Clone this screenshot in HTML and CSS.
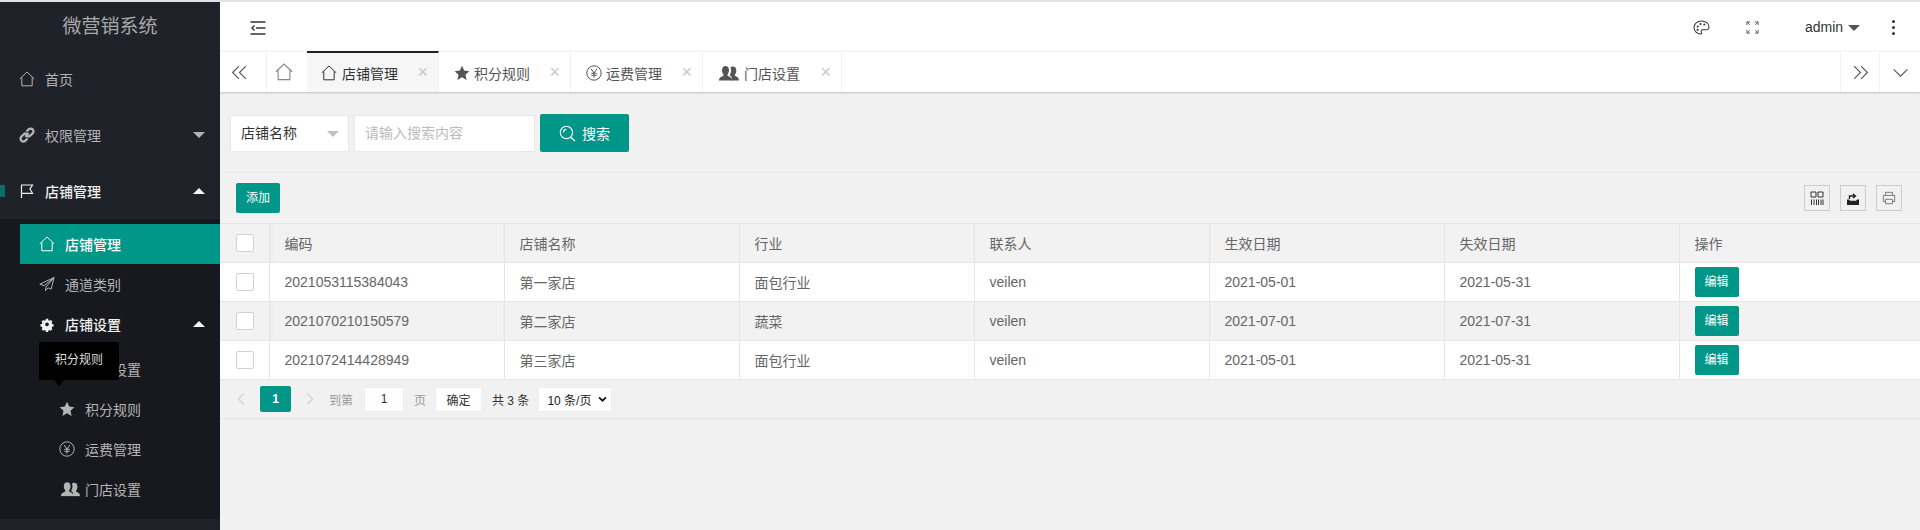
FILE: index.html
```html
<!DOCTYPE html>
<html lang="zh-CN">
<head>
<meta charset="utf-8">
<title>微营销系统</title>
<link rel="stylesheet" href="styles.css">
</head>
<body>
<svg class="defs" width="0" height="0" aria-hidden="true">
  <symbol id="i-home" viewBox="0 0 16 16"><path d="M.8 7.800 8 1l7.200 6.800M2.800 6.400v8.400h10.400V6.400" fill="none" stroke="currentColor" stroke-width="1"/></symbol>
  <symbol id="i-star" viewBox="0 0 16 16"><path d="M8 .8l2.200 4.800 5.200.6-3.900 3.500 1.100 5.200L8 12.300l-4.600 2.600 1.100-5.200L.6 6.200l5.200-.6z" fill="currentColor"/></symbol>
  <symbol id="i-rmb" viewBox="0 0 16 16"><circle cx="8" cy="8" r="7.200" fill="none" stroke="currentColor"/><path d="M5 3.800 8 8l3-4.200M8 8v4.600M5.300 8.300h5.400M5.300 10.300h5.400" fill="none" stroke="currentColor"/></symbol>
  <symbol id="i-users" viewBox="0 0 20 16"><path d="M0 15.500c0-3 2-3.600 4-4.600.9-.5.600-1.300.1-2C3.300 7.800 3 6.700 3 5.200 3 2.700 4.300 1 6.500 1S10 2.700 10 5.200c0 1.500-.3 2.600-1.100 3.700-.5.700-.8 1.500.1 2 2 1 4 1.600 4 4.600z" fill="currentColor"/><path d="M12 15.500h8c0-3-1.800-3.600-3.600-4.500-.8-.4-.6-1.200-.1-1.900.7-1 1-2 1-3.500C17.300 3 16 1.500 13.800 1.500c-1 0-1.800.3-2.400.9.500.8.700 1.800.7 2.800 0 1.700-.4 3-1.200 4.200-.4.600-.2 1 .4 1.300 1.500.8 2 2.500 .7 4.800z" fill="currentColor"/></symbol>
</svg>
<div class="app">
  <aside class="side">
    <div class="logo">微营销系统</div>
    <ul class="nav">
      <li class="item"><svg class="ico" viewBox="0 0 16 16"><use href="#i-home"/></svg>首页</li>
      <li class="item"><svg class="ico" viewBox="0 0 16 16"><path d="M6.300 9.700 9.700 6.300M7.500 4.500 9.600 2.400a2.800 2.800 0 0 1 4 4L11.500 8.500a2.800 2.800 0 0 1-3.800.1M8.500 11.500l-2.100 2.100a2.800 2.800 0 0 1-4-4L4.500 7.500a2.800 2.800 0 0 1 3.800-.1" fill="none" stroke="currentColor" stroke-width="2.300"/></svg>权限管理<i class="caret down"></i></li>
      <li class="item on"><span class="mark"></span><svg class="ico" viewBox="0 0 16 16"><path d="M2.500 15V2h11L11 6l2.500 4.300h-11" fill="none" stroke="currentColor" stroke-width="1.200"/></svg>店铺管理<i class="caret up"></i></li>
      <li class="sub">
        <div class="subitem active"><svg class="ico" viewBox="0 0 16 16"><use href="#i-home"/></svg>店铺管理</div>
        <div class="subitem"><svg class="ico" viewBox="0 0 16 16"><path d="M15 1.500.8 8.200l4.400 1.500L15 1.500 7 11l-.5 3.600 2.700-2.700 3 1.100z" fill="none" stroke="currentColor" stroke-linejoin="round"/></svg>通道类别</div>
        <div class="subitem on"><svg class="ico" viewBox="0 0 16 16"><path fill-rule="evenodd" d="M6.500 1h3l.4 2 1.500.7 1.800-1 2 2.100-1 1.800.6 1.400 2 .5v3l-2 .4-.6 1.500 1 1.800-2 2-1.800-1-1.500.6-.4 2h-3l-.4-2-1.500-.6-1.800 1-2-2 1-1.800-.6-1.500-2-.4v-3l2-.5.6-1.400-1-1.800 2-2.100 1.800 1 1.500-.7zM8 6a2.500 2.500 0 1 0 0 5 2.500 2.500 0 0 0 0-5z" fill="currentColor" transform="translate(2 1.900) scale(.75)"/></svg>店铺设置<i class="caret up"></i></div>
        <div class="subsub">
          <div class="leaf"><svg class="ico" viewBox="0 0 16 16"><rect x="1" y="2" width="14" height="12" fill="none" stroke="currentColor"/></svg>积分设置</div>
          <div class="leaf"><svg class="ico" viewBox="0 0 16 16"><use href="#i-star"/></svg>积分规则</div>
          <div class="leaf"><svg class="ico" viewBox="0 0 16 16"><use href="#i-rmb"/></svg>运费管理</div>
          <div class="leaf"><svg class="ico wide" viewBox="0 0 20 16"><use href="#i-users"/></svg>门店设置</div>
        </div>
      </li>
    </ul>
    <div class="tip">积分规则</div>
  </aside>
  <main class="main">
    <header class="top">
      <svg class="tool-ico" viewBox="0 0 16 16"><path d="M.5 2h15M.5 14h15M6 8h9.500M4.500 5.500 2 8l2.500 2.500" fill="none" stroke="#333" stroke-width="1.400"/></svg>
      <div class="top-right">
        <svg class="tr-ico" viewBox="0 0 18 16"><path d="M9 1C4.500 1 1 4 1 8s3.500 7 6.800 7c1.800 0 1.500-1.500 1-2.300-.6-1 .1-2.200 1.700-2.200h3c2 0 3.500-1 3.500-3C17 3.500 13.500 1 9 1z" fill="none" stroke="#333" stroke-width="1.100"/><circle cx="5" cy="7" r="1.100" fill="#333"/><circle cx="8" cy="4.300" r="1.100" fill="#333"/><circle cx="12" cy="4.800" r="1.100" fill="#333"/><circle cx="4.800" cy="10.500" r="1.100" fill="#333"/></svg>
        <svg class="tr-ico full" viewBox="0 0 14 14"><path d="M1 4.500V1h3.500M1 1l3 3M13 4.500V1H9.500M13 1l-3 3M1 9.500V13h3.500M1 13l3-3M13 9.500V13H9.500M13 13l-3-3" fill="none" stroke="#555" stroke-width="1"/></svg>
        <span class="user">admin<i class="caret dk"></i></span>
        <span class="more"><i></i><i></i><i></i></span>
      </div>
    </header>
    <nav class="tabs">
      <span class="tab-ctl first"><svg viewBox="0 0 16 14"><path d="M7.500 1 1.500 7l6 6M14 1 8 7l6 6" fill="none" stroke="#555" stroke-width="1.100"/></svg></span>
      <span class="tab-home"><svg class="ico-tab" viewBox="0 0 16 16"><use href="#i-home"/></svg></span>
      <span class="tab active"><svg class="ico-t" viewBox="0 0 16 16"><use href="#i-home"/></svg>店铺管理<b>×</b></span>
      <span class="tab"><svg class="ico-t" viewBox="0 0 16 16"><use href="#i-star"/></svg>积分规则<b>×</b></span>
      <span class="tab"><svg class="ico-t" viewBox="0 0 16 16"><use href="#i-rmb"/></svg>运费管理<b>×</b></span>
      <span class="tab wide"><svg class="ico-u" viewBox="0 0 20 16"><use href="#i-users"/></svg>门店设置<b>×</b></span>
      <span class="tab-ctl push"><svg viewBox="0 0 16 14"><path d="M2 1l6 6-6 6M8.500 1l6 6-6 6" fill="none" stroke="#555" stroke-width="1.100"/></svg></span>
      <span class="tab-ctl"><svg viewBox="0 0 16 14"><path d="M1.500 4 8 10.500 14.500 4" fill="none" stroke="#555" stroke-width="1.100"/></svg></span>
    </nav>
    <section class="content">
      <form class="search">
        <div class="fake-select">店铺名称<i class="caret gr"></i></div>
        <div class="fake-input">请输入搜索内容</div>
        <div class="btn-search"><svg viewBox="0 0 16 16"><circle cx="7" cy="7" r="5.800" fill="none" stroke="#fff" stroke-width="1.100"/><path d="M11 11.500l4 3.500M4.200 7A3 3 0 0 1 7 4" fill="none" stroke="#fff" stroke-width="1.100"/></svg>搜索</div>
      </form>
      <div class="toolbar">
        <span class="btn-add">添加</span>
        <div class="tools">
          <span class="tool"><svg viewBox="0 0 14 14"><path d="M1 1h5v5H1zM8 1h5v5H8zM1.500 8.500V14M4 8.500V14M6.500 8.500V14M8.500 8.500V14M11 8.500V14M13 8.500V14" fill="none" stroke="#333" stroke-width="1"/></svg></span>
          <span class="tool"><svg viewBox="0 0 14 14"><path d="M1 8.500h2l1 1.300h6l1-1.300h2V14H1z" fill="#222"/><path d="M3.500 8V5h5M7 3l2.500 2L7 7" fill="none" stroke="#222" stroke-width="1.400"/></svg></span>
          <span class="tool"><svg viewBox="0 0 16 16"><path d="M4 5V1.500h8V5M4 12H1.500V5h13v7H12M4 9.500h8V14.500H4z" fill="none" stroke="#777" stroke-width="1.100"/></svg></span>
        </div>
      </div>
      <table class="grid">
        <colgroup><col class="c0"><col class="c"><col class="c"><col class="c"><col class="c"><col class="c"><col class="c"><col></colgroup>
        <thead>
          <tr><th><span class="cb"></span></th><th>编码</th><th>店铺名称</th><th>行业</th><th>联系人</th><th>生效日期</th><th>失效日期</th><th>操作</th></tr>
        </thead>
        <tbody>
          <tr><td><span class="cb"></span></td><td>2021053115384043</td><td>第一家店</td><td>面包行业</td><td>veilen</td><td>2021-05-01</td><td>2021-05-31</td><td><span class="btn-edit">编辑</span></td></tr>
          <tr><td><span class="cb"></span></td><td>2021070210150579</td><td>第二家店</td><td>蔬菜</td><td>veilen</td><td>2021-07-01</td><td>2021-07-31</td><td><span class="btn-edit">编辑</span></td></tr>
          <tr><td><span class="cb"></span></td><td>2021072414428949</td><td>第三家店</td><td>面包行业</td><td>veilen</td><td>2021-05-01</td><td>2021-05-31</td><td><span class="btn-edit">编辑</span></td></tr>
        </tbody>
      </table>
      <div class="pager">
        <svg class="chev" viewBox="0 0 10 16"><path d="M8 2 2 8l6 6" fill="none" stroke="#d2d2d2" stroke-width="1.500"/></svg>
        <span class="page-cur">1</span>
        <svg class="chev next" viewBox="0 0 10 16"><path d="M2 2l6 6-6 6" fill="none" stroke="#d2d2d2" stroke-width="1.500"/></svg>
        <span class="lbl">到第</span>
        <span class="page-input">1</span>
        <span class="lbl pg">页</span>
        <span class="page-ok">确定</span>
        <span class="lbl total">共 3 条</span>
        <span class="page-size">10 条/页<svg viewBox="0 0 10 7"><path d="M1 1.500 5 5.500 9 1.500" fill="none" stroke="#111" stroke-width="2"/></svg></span>
      </div>
    </section>
  </main>
</div>
</body>
</html>
```
FILE: styles.css
```css
* { box-sizing: border-box; }
html, body { margin: 0; height: 530px; overflow: hidden; }
body { font-family: "Liberation Sans", "Noto Sans CJK SC", sans-serif; font-size: 14px; color: #666; background: #f1f1f1; }
.defs { position: absolute; }
.app { display: flex; height: 530px; border-top: 2px solid #e2e2e2; }

.side { position: relative; width: 220px; flex: none; background: #20222a; color: #b4b4b4; }
.logo { height: 49px; line-height: 50px; text-align: center; font-size: 19px; color: #a8a8a8; }
.nav { list-style: none; margin: 0; padding: 0; }
.item { position: relative; display: flex; align-items: center; height: 56px; padding-left: 19px; color: #b4b4b4; }
.item.on { color: #f0f0f0; font-weight: 500; }
.mark { position: absolute; left: 0; top: 22px; width: 5px; height: 12px; background: #0b6d66; }
.ico { width: 16px; height: 16px; flex: none; margin-right: 10px; }
.caret { position: absolute; right: 15px; top: 50%; width: 0; height: 0; border: 6px solid transparent; margin-top: -3px; border-bottom: 0; border-top-color: #b4b4b4; }
.caret.up { border-top: 0; border-bottom: 6px solid #f5f5f5; }
.sub { background: #17191e; padding-top: 5px; height: 300px; }
.subitem { position: relative; display: flex; align-items: center; height: 40px; margin-left: 20px; padding-left: 19px; color: #b4b4b4; }
.subitem.active { background: #009688; color: #fff; font-weight: 500; }
.subitem.on { color: #efefef; font-weight: 500; }
.subsub { padding-top: 5px; }
.leaf { display: flex; align-items: center; height: 40px; padding-left: 59px; color: #b4b4b4; }
.leaf .ico { width: 16px; height: 16px; margin-right: 10px; }
.leaf .ico.wide { width: 19px; margin-left: 2px; margin-right: 5px; }
.tip { position: absolute; left: 39px; top: 340px; width: 80px; height: 38px; line-height: 36px; background: #000; color: #ddd; font-size: 12px; text-align: center; border-radius: 2px; }
.tip::after { content: ""; position: absolute; left: 15px; top: 38px; border: 6px solid transparent; border-bottom: 0; border-left-width: 5px; border-right-width: 5px; border-top-color: #000; }

.main { flex: 1; min-width: 0; display: flex; flex-direction: column; }
.top { height: 49px; background: #fff; display: flex; align-items: center; justify-content: space-between; padding: 1px 25px 0 30px; }
.tool-ico { width: 16px; height: 16px; margin-top: 1px; }
.top-right { display: flex; align-items: center; }
.tr-ico { width: 17px; height: 15px; }
.tr-ico.full { width: 13px; height: 13px; margin-left: 36px; }
.user { position: relative; margin-left: 46px; width: 60px; color: #333; font-size: 14px; }
.user .caret { right: 5px; margin-top: -2px; border-top-color: #555; }
.more { display: flex; flex-direction: column; gap: 3px; margin-left: 27px; width: 3px; }
.more i { width: 3px; height: 3px; border-radius: 50%; background: #333; }

.tabs { position: relative; z-index: 2; display: flex; height: 41px; background: #fff; box-shadow: 0 1px 2px rgba(0,0,0,.2); border-top: 1px solid #f4f4f4; color: #555; }
.tab-ctl { width: 40px; display: flex; align-items: center; justify-content: center; border-right: 1px solid #f2f2f2; }
.tab-ctl.first { width: 47px; padding-right: 7px; }
.tab-ctl svg { width: 17px; height: 15px; }
.tab-ctl.push { margin-left: auto; border-left: 1px solid #f2f2f2; }
.tab-ctl:last-child { border-right: 0; }
.tab-home { width: 40px; display: flex; align-items: center; justify-content: center; padding-right: 7px; color: #888; }
.ico-tab { width: 18px; height: 18px; }
.tab { position: relative; width: 132px; display: flex; align-items: center; padding-left: 15px; border-right: 1px solid #f2f2f2; white-space: nowrap; margin-top: -1px; border-top: 2px solid transparent; }
.tab.active { background: #f6f6f6; border-top-color: #222; color: #333; padding-left: 14px; }
.tab.wide { width: 139px; padding-left: 14px; }
.tab b { position: absolute; right: 10px; top: 9px; font-weight: 400; font-size: 18px; line-height: 20px; color: #c6c6c6; }
.ico-t { width: 16px; height: 16px; margin-right: 4px; }
.tab.active .ico-t { margin-right: 5px; }
.ico-u { width: 20px; height: 16px; margin-right: 5px; margin-left: 2px; }

.content { flex: 1; min-height: 0; }
.search { display: flex; gap: 5px; padding: 22px 0 0 10px; height: 80px; }
.fake-select { position: relative; width: 119px; height: 37px; margin-top: 1px; line-height: 35px; background: #fff; border: 1px solid #e9e9e9; padding-left: 10px; color: #333; font-size: 14px; }
.fake-select .caret { right: 9px; margin-top: -3px; border-top-color: #c2c2c2; }
.fake-input { width: 181px; height: 37px; margin-top: 1px; line-height: 35px; background: #fff; border: 1px solid #e9e9e9; padding-left: 10px; color: #bbb; }
.btn-search { display: flex; align-items: center; justify-content: center; width: 89px; height: 38px; background: #009688; color: #fff; border-radius: 2px; }
.btn-search svg { width: 17px; height: 17px; margin-right: 6px; }

.toolbar { display: flex; align-items: center; justify-content: space-between; height: 51px; padding: 0 18px 0 16px; border-top: 1px solid #e9e9e9; }
.btn-add { width: 44px; height: 30px; line-height: 30px; background: #009688; color: #fff; text-align: center; font-size: 12px; border-radius: 2px; }
.tools { display: flex; gap: 10px; }
.tool { width: 26px; height: 26px; border: 1px solid #ccc; display: flex; align-items: center; justify-content: center; }
.tool svg { width: 14px; height: 14px; }

.grid { width: 100%; table-layout: fixed; border-collapse: collapse; }
.c0 { width: 49px; }
.c { width: 235px; }
.grid th, .grid td { height: 39px; padding: 0 15px; text-align: left; font-weight: 400; border: 1px solid #e6e6e6; border-left: 0; color: #666; white-space: nowrap; }
.grid th:first-child, .grid td:first-child { padding: 0 0 0 16px; }
.grid th:last-child, .grid td:last-child { border-right: 0; }
.grid thead tr { background: #f2f2f2; }
.grid tbody tr { background: #fff; }
.grid tbody tr:nth-child(2) { background: #f2f2f2; }
.grid th:nth-child(2), .grid tbody tr:nth-child(2) td:nth-child(2) { background: linear-gradient(90deg, #e9e9e9, #f2f2f2 5px); }
.cb { display: block; width: 18px; height: 18px; background: #fff; border: 1px solid #d2d2d2; border-radius: 2px; }
.btn-edit { display: block; width: 44px; height: 30px; line-height: 30px; background: #009688; color: #fff; font-size: 12px; text-align: center; border-radius: 2px; }

.pager { display: flex; align-items: center; height: 39px; padding-left: 16px; border-bottom: 1px solid #e6e6e6; font-size: 12px; color: #333; }
.chev { width: 10px; height: 14px; }
.page-cur { width: 31px; height: 26px; line-height: 26px; margin-left: 14px; background: #009688; color: #fff; text-align: center; border-radius: 2px; font-weight: 700; }
.chev.next { margin-left: 14px; }
.lbl { color: #999; }
.pager .lbl { margin-left: 14px; }
.page-input { width: 40px; height: 25px; line-height: 23px; margin-left: 11px; background: #fff; border: 1px solid #eee; text-align: center; border-radius: 2px; }
.pager .lbl.pg { margin-left: 10px; }
.page-ok { width: 47px; height: 25px; line-height: 25px; margin-left: 9px; padding-top: 1px; background: #fff; border: 1px solid #eee; text-align: center; color: #333; }
.pager .lbl.total { margin-left: 10px; color: #333; }
.page-size { display: flex; align-items: center; justify-content: space-between; width: 74px; height: 25px; margin-left: 9px; padding: 0 4px 0 8px; background: #fff; border: 1px solid #eee; color: #222; border-radius: 2px; }
.page-size svg { width: 9px; height: 6px; }
```
